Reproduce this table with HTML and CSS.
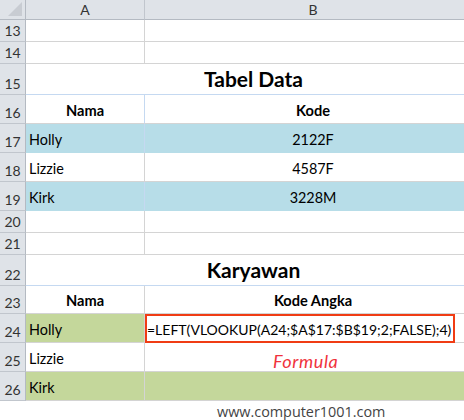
FILE: index.html
```html
<!DOCTYPE html>
<html>
<head>
<meta charset="utf-8">
<link rel="stylesheet" href="styles.css">
</head>
<body>
<div class="sheet">
  <div class="row hdr">
    <div class="corner"><span class="tri"></span></div>
    <div class="colh">A</div>
    <div class="colh">B</div>
  </div>
  <div class="row h22"><div class="rn">13</div><div class="c"></div><div class="c"></div></div>
  <div class="row h22"><div class="rn">14</div><div class="c"></div><div class="c"></div></div>
  <div class="row h31"><div class="rn">15</div><div class="c title span2">Tabel Data</div></div>
  <div class="row h29 bluetop"><div class="rn">16</div><div class="c b ctr bl">Nama</div><div class="c b ctr">Kode</div></div>
  <div class="row h29 blue"><div class="rn">17</div><div class="c bl">Holly</div><div class="c ctr">2122F</div></div>
  <div class="row h29"><div class="rn">18</div><div class="c bl">Lizzie</div><div class="c ctr">4587F</div></div>
  <div class="row h29 blue"><div class="rn">19</div><div class="c bl">Kirk</div><div class="c ctr">3228M</div></div>
  <div class="row h22"><div class="rn">20</div><div class="c"></div><div class="c"></div></div>
  <div class="row h22"><div class="rn">21</div><div class="c"></div><div class="c"></div></div>
  <div class="row h31"><div class="rn">22</div><div class="c title span2">Karyawan</div></div>
  <div class="row h28"><div class="rn">23</div><div class="c b ctr">Nama</div><div class="c b ctr">Kode Angka</div></div>
  <div class="row h29 green"><div class="rn">24</div><div class="c">Holly</div><div class="c formula">=LEFT(VLOOKUP(A24;$A$17:$B$19;2;FALSE);4)<span class="redbox"></span></div></div>
  <div class="row h29"><div class="rn">25</div><div class="c">Lizzie</div><div class="c"><span class="flabel">Formula</span></div></div>
  <div class="row h29 green"><div class="rn">26</div><div class="c">Kirk</div><div class="c"></div></div>
</div>
<div class="wm">www.computer1001.com</div>
</body>
</html>
```
FILE: styles.css
```css
html, body { margin: 0; padding: 0; background: #fff; }
body { width: 464px; height: 420px; overflow: hidden; font-family: Lato, "Liberation Sans", sans-serif; color: #000; }
.sheet { width: 482px; }
.row { display: grid; grid-template-columns: 26px 119px 337px; }
.h22 { height: 22px; }
.h28 { height: 28px; }
.h29 { height: 29px; }
.h31 { height: 31px; }
.hdr { height: 20px; }
.corner { background: #dfe3e8; border-right: 1px solid #b4bac2; border-bottom: 1px solid #b4bac2; position: relative; }
.tri { position: absolute; right: 3px; bottom: 3px; width: 0; height: 0; border-left: 14px solid transparent; border-bottom: 14px solid #c8ccd2; }
.colh { background: #dfe3e8; border-right: 1px solid #c1c6cd; border-bottom: 1px solid #b4bac2; display: flex; align-items: center; justify-content: center; font-size: 14px; color: #333; }
.rn { background: #dfe3e8; border-right: 1px solid #b4bac2; border-bottom: 1px solid #c1c6cd; display: flex; align-items: flex-end; justify-content: center; font-size: 14px; color: #333; padding-bottom: 3px; box-sizing: border-box; line-height: 14px; }
.c { border-right: 1px solid #d4d4d4; border-bottom: 1px solid #d4d4d4; display: flex; align-items: flex-end; padding: 0 3px 4px; box-sizing: border-box; font-size: 14.4px; line-height: 16px; position: relative; }
.formula { font-size: 14px; padding-left: 2px; white-space: nowrap; }
.span2 { grid-column: 2 / 4; }
.title { justify-content: center; font-weight: bold; font-size: 21px; line-height: 22px; padding-bottom: 4px; border-bottom-color: #c5d9f1; }
.b { font-weight: bold; font-size: 14.6px; }
.ctr { justify-content: center; }
.blue .c { background: #b7dde8; border-bottom-color: #b7dde8; }
.blue .c.bl, .bluetop .c.bl { border-right-color: #c5d9f1; }
.green .c { background: #c4d79b; border-bottom-color: #d4d4d4; }
.green .c.formula { background: #fff; }
.redbox { position: absolute; left: 0; top: 0; width: 310px; bottom: -1px; border: 2px solid #f03c14; box-sizing: border-box; }
.flabel { color: #f0323c; font-style: italic; font-size: 18px; letter-spacing: 0.6px; margin-left: 125px; margin-bottom: -2px; }
.wm { position: absolute; left: 217px; top: 402px; font-size: 14.4px; color: #444; font-family: "Open Sans", sans-serif; }
```
